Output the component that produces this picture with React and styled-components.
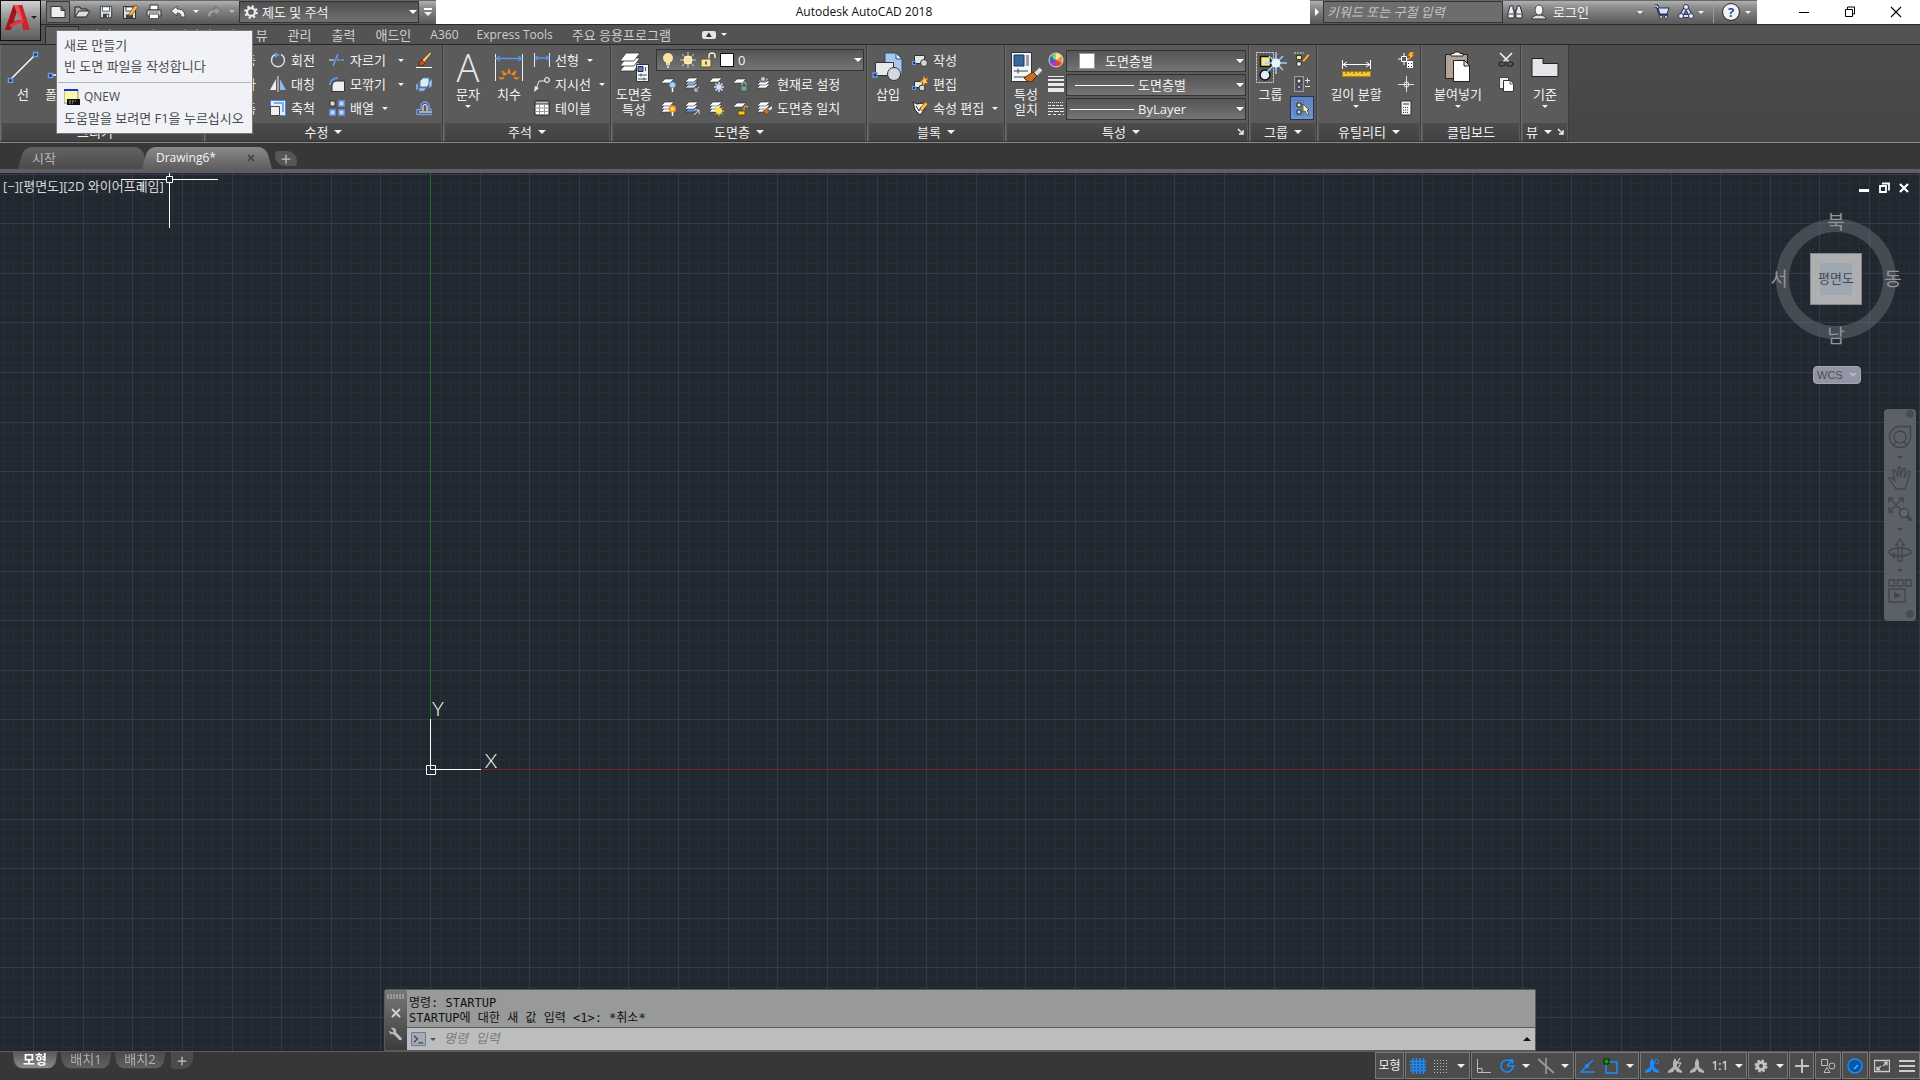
import React from "react";
import styled, { createGlobalStyle } from "styled-components";

const GlobalStyle = createGlobalStyle`
	* {
		box-sizing: border-box;
	}
	body {
		margin: 0;
		overflow: hidden;
		background: #373737;
		color: #f2f2f2;
		font: 13px/16px "Open Sans", "Noto Sans CJK KR", sans-serif;
	}
	button,
	input,
	select {
		margin: 0;
		padding: 0;
		border: 0;
		border-radius: 0;
		background: none;
		color: inherit;
		font: inherit;
	}
	svg {
		display: block;
		flex: none;
	}
`;

/* ---------- icons ---------- */

const sheet = (y, fill = "#fff") => (
	<path d={`M5 ${y}h9l-4 4H1z`} fill={fill} stroke="#333" strokeWidth=".6" />
);
const stack = (a = "#fff", b = "#fff", c = "#fff") => (
	<>
		{sheet(8, c)}
		{sheet(5, b)}
		{sheet(2, a)}
	</>
);
const Compass = ({ fill }) => (
	<path d="M8 0l2 4v5l5 4v2l-5-1-2-3-2 3-5 1v-2l5-4V4z" fill={fill} />
);

const icons = {
	newFile: (
		<path d="M1 2.500h10l4 4v7H1z M11 2.500v4h4" fill="#eee" stroke="#333" />
	),
	open: (
		<>
			<path d="M1 13V3h5l1 2h6v2" fill="#aaa" stroke="#222" />
			<path d="M1 13l4-6h11l-4 6z" fill="#ddd" stroke="#222" />
		</>
	),
	save: (
		<>
			<path d="M1.500 1.500h13v13h-13z" fill="#ddd" stroke="#272f3b" />
			<path d="M4 2h8v5H4z" fill="#fff" stroke="#455" />
			<path d="M4.500 10h7v4.500h-7z" fill="#345" />
			<path d="M9 11h1.500v3H9z" fill="#eee" />
		</>
	),
	saveAs: (
		<>
			<path d="M1.500 2.500h12v12h-12z" fill="#ddd" stroke="#272f3b" />
			<path d="M4 3h7v4H4z" fill="#fff" stroke="#455" />
			<path d="M4 10.500h7v4H4z" fill="#345" />
			<path d="M7 10l6-9 3 2-6 8-3 1z" fill="#f4b942" stroke="#6b3d11" strokeWidth=".7" />
		</>
	),
	print: (
		<>
			<path d="M4 1h8v5H4z" fill="#fff" stroke="#333" />
			<path d="M1 6h14v6H1z" fill="#ccd0d6" stroke="#333" />
			<path d="M3.500 10h9v4.500h-9z" fill="#fff" stroke="#555" />
			<path d="M3 8h10" stroke="#788" />
		</>
	),
	undo: <path d="M1 7l6-5v3c5 0 8 2 8 8h-4c0-3-1-4-4-4v3z" fill="#eee" stroke="#333" strokeWidth=".8" />,
	redo: <path d="M15 7L9 2v3c-5 0-8 2-8 8h4c0-3 1-4 4-4v3z" fill="#999" stroke="#666" strokeWidth=".8" />,
	gear: (
		<>
			<circle cx="8" cy="8" r="6.500" fill="none" stroke="#eee" strokeWidth="2.500" strokeDasharray="2.500 2.600" />
			<circle cx="8" cy="8" r="4.500" fill="none" stroke="#eee" strokeWidth="2.500" />
		</>
	),
	binoculars: (
		<>
			<path d="M3 2h3v3l1 2v7H1V9z M10 2h3l2 7v5H9V7l1-2z" fill="#eee" stroke="#222b3d" />
			<path d="M7 6h2v4H7z" fill="#445" />
			<path d="M2 10h4M10 10h4" stroke="#334" />
		</>
	),
	user: (
		<>
			<path d="M1 15c0-3 3-3 5-4h4c2 1 5 1 5 4z" fill="#ddd" stroke="#334" />
			<ellipse cx="8" cy="6" rx="4" ry="5" fill="#f4f4f4" stroke="#445" />
		</>
	),
	cart: (
		<>
			<path d="M0 2h3l3 8h8" fill="none" stroke="#26356b" strokeWidth="3" />
			<path d="M4 4h11l-2 6H6z" fill="#dfe3ee" stroke="#26356b" />
			<path d="M0 2h3l1 2" stroke="#fff" fill="none" />
			<circle cx="7" cy="13" r="1.500" fill="#fff" stroke="#26356b" />
			<circle cx="12" cy="13" r="1.500" fill="#fff" stroke="#26356b" />
		</>
	),
	exchange: (
		<>
			<path d="M8 3l5 9H3z" fill="none" stroke="#26356b" strokeWidth="4" strokeLinejoin="round" />
			<path d="M8 3l5 9H3z" fill="none" stroke="#dfe3ee" strokeWidth="2" />
			<circle cx="8" cy="3" r="2.500" fill="#eee" stroke="#26356b" />
			<circle cx="3" cy="12" r="2.500" fill="#eee" stroke="#26356b" />
			<circle cx="13" cy="12" r="2.500" fill="#eee" stroke="#26356b" />
		</>
	),
	line: (
		<>
			<path d="M3 29L29 3" stroke="#fff" strokeWidth="1.500" />
			<path d="M1.500 27.500h4v4h-4z M26.500 1.500h4v4h-4z" fill="#234" stroke="#6a9cf0" strokeWidth="1.500" />
		</>
	),
	polyline: (
		<>
			<path d="M3 24h22a8 8 0 0 0 0-16" fill="none" stroke="#fff" strokeWidth="1.500" />
			<path d="M1.500 22.500h4v4h-4z" fill="#234" stroke="#6a9cf0" strokeWidth="1.500" />
		</>
	),
	move: <path d="M8 0v16M0 8h16" stroke="#ddd" strokeWidth="2" />,
	copy: (
		<>
			<circle cx="6" cy="6" r="4" fill="none" stroke="#6a9cf0" />
			<circle cx="10" cy="10" r="4" fill="none" stroke="#ddd" />
		</>
	),
	stretch: <path d="M1 5h9v9H1z" fill="none" stroke="#ddd" strokeDasharray="2 1" />,
	rotate: (
		<>
			<path d="M5 2.500a6.500 6.500 0 1 0 6 0" fill="none" stroke="#ddd" strokeWidth="1.500" />
			<path d="M5 0l5 3-5 3z" fill="#5b96ee" />
		</>
	),
	mirror: (
		<>
			<path d="M6 3v11H0z" fill="#eee" />
			<path d="M10 3v11h6z" fill="#8fb8ea" />
			<path d="M8 0v16" stroke="#eee" />
		</>
	),
	scale: (
		<>
			<path d="M.500.500h15v15H.500z" fill="#e8eefb" stroke="#4f86d9" />
			<path d="M4 3h9v9" fill="none" stroke="#7fa9e8" strokeWidth="2" />
			<path d="M.500 6.500h9v9h-9z" fill="#eee" stroke="#444" />
		</>
	),
	trim: (
		<>
			<path d="M0 8h5" stroke="#eee" />
			<path d="M4 14L9 2" stroke="#6a9cf0" strokeWidth="1.500" />
			<path d="M8 8h8" stroke="#6a9cf0" strokeWidth="1.500" strokeDasharray="3 1" />
		</>
	),
	fillet: (
		<>
			<path d="M3 15.500V10c0-3 2-5 5-5h7.500v10.500z" fill="#eee" stroke="#333" />
			<path d="M1 9c0-4 3-7 8-7" fill="none" stroke="#5b96ee" strokeWidth="2" />
		</>
	),
	array: (
		<>
			<path d="M1 1h5v5H1z" fill="#ddd" stroke="#333" />
			<path d="M10 1h5v5h-5z M1 10h5v5H1z M10 10h5v5h-5z" fill="#c6d8f5" stroke="#6a9cf0" strokeWidth="1.500" />
		</>
	),
	erase: (
		<>
			<path d="M5 9L14 0l2 1-8 10z" fill="#f3c76b" stroke="#222" strokeWidth=".6" />
			<path d="M3 10l3-2 3 3c-2 3-4 3-6 2z" fill="#d94a12" stroke="#401" strokeWidth=".6" />
			<path d="M0 15.500h16" stroke="#fff" />
		</>
	),
	explode: (
		<>
			<path d="M4 5l3-3h6v6l-2 3H4z" fill="#dfe8f5" stroke="#5b82b8" />
			<path d="M0 9l2-2v6l-2 1z M13 6l3-3v7l-3 2z M3 12h7l-2 3H3z" fill="#9bbbe2" stroke="#5b82b8" strokeWidth=".6" />
		</>
	),
	offset: (
		<>
			<path d="M16 14.500H2.500a2 2 0 0 1 0-5H5V6a4 4 0 0 1 8 0v3.500h3" fill="none" stroke="#6a9cf0" strokeWidth="1.500" />
			<path d="M16 12H3M7 11V6.500a2 2 0 0 1 4 0V11" fill="none" stroke="#fff" />
		</>
	),
	dimension: (
		<>
			<path d="M2.500 3v27M29.500 3v27" stroke="#eee" />
			<path d="M3 7.500h26M7 5L3 7.500 7 10M25 5l4 2.500-4 2.500" fill="none" stroke="#5b96ee" strokeWidth="1.300" />
			<path d="M15 22l1-4 1 4z M11 24l-2-4 4 3z M21 24l2-4-4 3z M8 28l-1-1 4 0z M24 28l1-1-4 0z" fill="#ffc83c" stroke="#e68414" strokeWidth="1.500" />
		</>
	),
	linear: (
		<>
			<path d="M.500 1v14M15.500 1v14" stroke="#eee" />
			<path d="M1 6h14M4 4L1 6l3 2M12 4l3 2-3 2" fill="none" stroke="#5b96ee" strokeWidth="1.300" />
		</>
	),
	leader: (
		<>
			<path d="M2 13L5 5h6" fill="none" stroke="#eee" />
			<path d="M0 16l1-6 4 2z" fill="#eee" />
			<circle cx="13" cy="4" r="2.500" fill="#666" stroke="#fff" />
		</>
	),
	table: (
		<>
			<path d="M1 1h14v14H1z" fill="#fff" stroke="#222" />
			<path d="M1 1h14v3H1z" fill="#a9c2d6" stroke="#333" />
			<path d="M1 8h14M1 11.500h14M5.500 4v11M10.500 4v11" stroke="#999" />
		</>
	),
	layerProps: (
		<>
			{[14, 9, 4].map((y) => (
				<path key={y} d={`M8 ${y - 2}h14l-6 8H2z`} fill="#fff" stroke="#333" strokeWidth=".8" />
			))}
			<path d="M18.500 13.500h12v17h-12z" fill="#f4f5f9" stroke="#333" />
			<path d="M20 15.500h5v5h-5z" fill="#4f80c6" stroke="#225" />
			<path d="M27.500 16v4M20 24h9M20 28h9M23 22.500v3M26 26.500v3" stroke="#456" />
		</>
	),
	bulb: (
		<>
			<circle cx="8" cy="6" r="5" fill="#f7e6a0" />
			<path d="M6 9h4v3H6z" fill="#f7e6a0" />
			<path d="M6 12.500h4M7 15h2" stroke="#ccc" strokeWidth="2" />
		</>
	),
	sun: (
		<>
			<path d="M8 0v16M0 8h16M2 2l12 12M14 2L2 14" stroke="#ddd" strokeWidth=".9" />
			<circle cx="8" cy="8" r="4" fill="#f7e6a0" stroke="#fff6cc" />
		</>
	),
	unlock: (
		<>
			<path d="M9 7V4a3 3 0 0 1 6 0v2" fill="none" stroke="#f3ead0" strokeWidth="1.500" />
			<path d="M1 7h10v8H1z" fill="#f7e6a0" stroke="#5f5426" />
			<path d="M6 9.500v3" stroke="#333" strokeWidth="1.500" />
		</>
	),
	layerOff: (
		<>
			{sheet(3)}
			<circle cx="12.500" cy="9" r="3" fill="#a8d4f7" stroke="#5490cf" />
			<path d="M12.500 12v4" stroke="#fff" strokeWidth="1.500" />
		</>
	),
	layerIso: (
		<>
			{stack("#fff", "#8fb8e8", "#cde")}
			<path d="M15 11l-4 4M11 12v3h3" fill="none" stroke="#ddd" />
		</>
	),
	layerFreeze: (
		<>
			{sheet(2)}
			<path d="M11 6v10M6 11h10M7.500 7.500l7 7M14.500 7.500l-7 7" stroke="#cfe2ff" strokeWidth="1.500" />
		</>
	),
	layerLock: (
		<>
			{sheet(3)}
			<path d="M10 10V8a2 2 0 0 1 4 0v2" fill="none" stroke="#a9c9c4" />
			<path d="M9 10h6v5H9z" fill="#7ba69e" stroke="#3f5f5a" />
		</>
	),
	layerCurrent: (
		<>
			{stack("#7fa9d8", "#fff", "#fff")}
			<circle cx="7" cy="3" r="2.500" fill="#ccc" stroke="#555" />
		</>
	),
	layerOn: (
		<>
			{stack()}
			<circle cx="12.500" cy="9" r="3" fill="#ffd25a" stroke="#e8891c" strokeWidth="1.500" />
			<path d="M12.500 12v4" stroke="#fff" strokeWidth="1.500" />
		</>
	),
	layerUniso: (
		<>
			{stack("#fff", "#fff", "#5d92e0")}
			<path d="M10 15l5-5M11 10h4v4" fill="none" stroke="#ddd" />
		</>
	),
	layerThaw: (
		<>
			{stack()}
			<path d="M11 6v10M6 11h10M7.500 7.500l7 7M14.500 7.500l-7 7" stroke="#ffd84a" />
			<circle cx="11" cy="11" r="3" fill="#ffe340" />
		</>
	),
	layerUnlock: (
		<>
			{sheet(3)}
			<path d="M12 11V8a2 2 0 0 1 4 0" fill="none" stroke="#ffc321" />
			<path d="M6 11h7v4H6z" fill="#ffc321" stroke="#6b4700" />
		</>
	),
	layerMatch: (
		<>
			{stack()}
			<path d="M16 7l-3 3" stroke="#eee" strokeWidth="2" />
			<path d="M7 11l5-2 2 3-4 3z" fill="#c8701e" stroke="#532a04" strokeWidth=".6" />
		</>
	),
	insert: (
		<>
			<path d="M13 2h11l6 6v16H13z" fill="#a9c8ee" stroke="#2e4e78" />
			<path d="M24 2v6h6z" fill="#eaf2fd" stroke="#2e4e78" />
			<path d="M3.500 11.500h18v13h-18z" fill="#e8e9ec" stroke="#333" />
			<circle cx="22" cy="23" r="6.500" fill="#d5d8dd" stroke="#333" />
			<path d="M1 22h4v4H1z" fill="#234" stroke="#6a9cf0" strokeWidth="1.300" />
		</>
	),
	blockCreate: (
		<>
			<path d="M2.500 3.500h10v8h-10z" fill="#e4e6ea" stroke="#333" />
			<circle cx="12" cy="11" r="3.500" fill="#cfd2d8" stroke="#333" />
			<path d="M.500 9.500h3v3h-3z" fill="#234" stroke="#6a9cf0" />
		</>
	),
	blockEdit: (
		<>
			<path d="M2.500 5.500h8v6h-8z" fill="#e4e6ea" stroke="#333" />
			<circle cx="10" cy="12" r="3" fill="#cfd2d8" stroke="#333" />
			<path d="M.500 10.500h3v3h-3z" fill="#234" stroke="#6a9cf0" />
			<path d="M12 0l1 3 3-1-2 3 2 2-3 0-2 3 0-4-3 0 3-2z" fill="#ffd25a" stroke="#e27b12" strokeWidth=".6" />
		</>
	),
	attribute: (
		<>
			<path d="M1 2l4 2 6-1 2 6-5 6-5-5z" fill="#eee" stroke="#222" />
			<path d="M4 6l3 5 2-4" fill="none" stroke="#333" />
			<path d="M8 9l5-7 3 2-6 7z" fill="#ffc14d" stroke="#8a3d08" strokeWidth=".7" />
		</>
	),
	matchProps: (
		<>
			<path d="M1.500 1.500h20v29h-20z" fill="#f4f5f9" stroke="#333" />
			<path d="M4 4h10v11H4z" fill="#39689f" stroke="#1b3457" />
			<path d="M16 4h3v11h-3z" fill="#9aa1ab" />
			<path d="M4 20h14M4 26h14M8 17.500v5" stroke="#345" />
			<path d="M31 18l-6 6" stroke="#ddd" strokeWidth="4" />
			<path d="M14 27l9-6 4 4-6 6c-3 0-5-2-7-4z" fill="#c8701e" stroke="#532a04" />
		</>
	),
	wheel: (
		<>
			{["#f4e04a", "#f0953a", "#e4403a", "#b03ab8", "#3a5fd0", "#45b04a"].map((c, i) => (
				<path key={c} d="M8 8V1a7 7 0 0 1 6.060 3.500z" fill={c} transform={`rotate(${i * 60} 8 8)`} />
			))}
			<circle cx="8" cy="8" r="7" fill="none" stroke="#ddd" />
			<circle cx="8" cy="5" r="3" fill="#fff" opacity=".4" />
		</>
	),
	weights: (
		<>
			<path d="M0 .500h16" stroke="#e8e8e8" />
			<path d="M0 4h16" stroke="#e8e8e8" strokeWidth="2" />
			<path d="M0 8.500h16" stroke="#e8e8e8" strokeWidth="3" />
			<path d="M0 14h16" stroke="#e8e8e8" strokeWidth="4" />
		</>
	),
	linetypes: (
		<>
			<path d="M0 2.500h16" stroke="#e8e8e8" strokeDasharray="1 1" />
			<path d="M0 5.500h16" stroke="#e8e8e8" strokeDasharray="3 1" />
			<path d="M0 8.500h16" stroke="#e8e8e8" />
			<path d="M0 11.500h16" stroke="#e8e8e8" strokeDasharray="5 1" />
			<path d="M0 14.500h16" stroke="#e8e8e8" strokeDasharray="3 2" />
		</>
	),
	group: (
		<>
			<path d="M1.500 1.500h17v30h-17z" fill="none" stroke="#ddd" strokeDasharray="2 1" />
			<path d="M5.500 5.500h10v10h-10z" fill="#f3e48c" stroke="#111" strokeWidth="1.500" />
			<circle cx="10" cy="24" r="5" fill="#e4eef0" stroke="#111" strokeWidth="1.500" />
			<path d="M21 1v22M10 12h22M14 5l14 14M28 5L12 21" stroke="#9cd0ff" strokeWidth="1.500" />
			<circle cx="21" cy="12" r="4.500" fill="#eaf6ff" />
		</>
	),
	groupEdit: (
		<>
			<path d="M0 1h10" stroke="#ddd" strokeDasharray="2 1" />
			<path d="M2.500 3.500h5v4h-5z" fill="#f3e48c" stroke="#333" />
			<circle cx="5" cy="12" r="2.500" fill="#dfeeee" stroke="#222" />
			<path d="M8 9l6-7 2 1-6 7z" fill="#ffc14d" stroke="#a0320a" strokeWidth=".6" />
		</>
	),
	ungroup: (
		<>
			<path d="M.500.500h9v15h-9z" fill="none" stroke="#ddd" strokeDasharray="1 1" />
			<path d="M3 3h4v4H3z" fill="#ddd" stroke="#222" />
			<circle cx="5" cy="11" r="2" fill="#8db8ee" stroke="#223" />
			<path d="M11 4.500h5M13.500 2v5M11 10.500h5" stroke="#ddd" />
		</>
	),
	groupSelect: (
		<>
			<path d="M.500.500h9v15h-9z" fill="none" stroke="#3f6fd0" strokeDasharray="1 1" />
			<path d="M3 3h4v4H3z" fill="#f3e48c" stroke="#222" />
			<path d="M3 10h4v4H3z" fill="#c9d7dc" stroke="#222" />
			<path d="M9 4l6 6-2 .500 2 4-2 .500-2-4-2 1z" fill="#fbf3a8" stroke="#333" strokeWidth=".7" />
		</>
	),
	measure: (
		<>
			<path d="M2.500 9v9M30.500 9v9M3 13.500h27M7 11l-4 2.500 4 2.500M26 11l4 2.500-4 2.500" fill="none" stroke="#fff" />
			<path d="M2.500 20.500h28v5h-28z" fill="#f4ca2e" stroke="#b3820d" />
			<path d="M6 20v3M10 20v2M14 20v3M18 20v2M22 20v3M26 20v2" stroke="#7a5500" />
		</>
	),
	quickSelect: (
		<>
			<path d="M6 1v4M6 9v4M0 7h4M8 7h3" stroke="#fff" />
			<path d="M3.500 4.500h5v5h-5z" fill="none" stroke="#fff" />
			<path d="M12 0h4l-2 3h2l-5 5 1-4h-2z" fill="#ffb62b" stroke="#c9650a" strokeWidth=".5" />
			<path d="M9 9h6v7H9z" fill="#fff" />
			<path d="M10 11.500h1m2 0h1M10 14.500h1m2 0h1" stroke="#222" />
		</>
	),
	point: (
		<>
			<path d="M8.500 0v16M0 8.500h16" stroke="#ddd" />
			<circle cx="8.500" cy="8.500" r="2.500" fill="none" stroke="#eee" />
		</>
	),
	calculator: (
		<>
			<path d="M3 1h10v14H3z" fill="#f2f2f2" stroke="#333" />
			<path d="M5 3h6v2H5z" fill="#8b9499" />
			<path d="M5 7.500h6M5 10h6M5 12.500h6" stroke="#444" strokeDasharray="1 1" />
		</>
	),
	paste: (
		<>
			<path d="M3.500 3.500h22v24h-22z" fill="#b3a396" stroke="#222" />
			<path d="M9 5V2.500h3L13 1h4l1 1.500h3V5z" fill="#fff" stroke="#222" />
			<path d="M11.500 9.500h11l5 5v16h-16z" fill="#fff" stroke="#222" />
			<path d="M22 9v6h6z" fill="#ddd" stroke="#222" />
		</>
	),
	cut: (
		<>
			<path d="M2 1l9 9M14 1l-9 9" stroke="#eee" strokeWidth="1.700" />
			<ellipse cx="4" cy="12" rx="3" ry="2" fill="none" stroke="#2f2f2f" strokeWidth="1.500" />
			<ellipse cx="12" cy="12" rx="3" ry="2" fill="none" stroke="#2f2f2f" strokeWidth="1.500" />
		</>
	),
	copyClip: (
		<>
			<path d="M1.500 1.500h9v11h-9z" fill="#eee" stroke="#444" />
			<path d="M5.500 4.500h7l3 3v8h-10z" fill="#fff" stroke="#333" />
			<path d="M12 4v4h4" fill="none" stroke="#555" />
		</>
	),
	baseView: <path d="M3 7.500h11v5h15v13H3z" fill="#e3e5ea" stroke="#222" />,
	gridOn: (
		<path d="M0 3.500h16M0 6.500h16M0 9.500h16M0 12.500h16M3 0v16M6.500 0v16M10 0v16M13.500 0v16" stroke="#1b8cff" strokeWidth="1.500" />
	),
	snapDots: (
		<path d="M1 2.500h14M1 5.500h14M1 8.500h14M1 11.500h14M1 14.500h14" stroke="#bdbdbd" strokeDasharray="1 2" />
	),
	ortho: <path d="M1.500 1v13.500H15M2 10.500h4v4" fill="none" stroke="#bdbdbd" />,
	polar: (
		<path d="M14 8a6 6 0 1 1-3-5.200M8 8h8M8 8l5-5.500M10 2h3.500v3.500" fill="none" stroke="#1b8cff" strokeWidth="1.500" />
	),
	iso: (
		<>
			<path d="M8 0v16" stroke="#ccc" />
			<path d="M0 1l16 14" stroke="#999" strokeWidth="2" />
		</>
	),
	otrack: (
		<>
			<path d="M13 2L1 14h14" fill="none" stroke="#1b8cff" strokeWidth="1.500" />
			<circle cx="7" cy="8" r="2" fill="#1b8cff" />
		</>
	),
	osnap: (
		<>
			<path d="M3 4h11v11H3z" fill="none" stroke="#1b8cff" strokeWidth="1.500" />
			<path d="M1 1h5v5H1z" fill="#0a0" stroke="#020" />
		</>
	),
	annoVisible: (
		<>
			<Compass fill="#1b8cff" />
			<circle cx="12.500" cy="3.500" r="2" fill="#445" stroke="#1b8cff" />
		</>
	),
	annoAuto: (
		<>
			<Compass fill="#b5b5b5" />
			<path d="M13 0l-3 5h4l-3 5" fill="none" stroke="#ddd" />
		</>
	),
	annoScale: <Compass fill="#b5b5b5" />,
	cog: (
		<>
			<circle cx="8" cy="8" r="5" fill="none" stroke="#c4c4c4" strokeWidth="3" strokeDasharray="2.400 1.500" />
			<circle cx="8" cy="8" r="3.500" fill="none" stroke="#c4c4c4" strokeWidth="3" />
		</>
	),
	plus: <path d="M8 1v14M1 8h14" stroke="#c4c4c4" strokeWidth="2" />,
	isolate: (
		<>
			<path d="M1.500 1.500h6v6h-6z M7 9.500l3 5H4z" fill="none" stroke="#bdbdbd" />
			<circle cx="12" cy="8" r="3" fill="none" stroke="#bdbdbd" />
		</>
	),
	hardware: (
		<>
			<circle cx="8" cy="8" r="7" fill="#0757a8" stroke="#1b8cff" strokeWidth="1.500" />
			<path d="M7 11l4-4" stroke="#5bb2ff" strokeWidth="1.500" />
		</>
	),
	fullscreen: (
		<path d="M.500 2.500h15v11H.500z M9 8l4-3.500M10 4.500h3v3M7 8l-4 3.500M3 8.500v3h3" fill="none" stroke="#ccc" strokeWidth="1.300" />
	),
	menu: <path d="M0 3h16M0 8h16M0 13h16" stroke="#ccc" strokeWidth="2" />,
	minimize: <path d="M3 8.500h10" stroke="#000" />,
	restore: <path d="M3.500 5.500h7v7h-7z M5.500 5v-2h7v7h-2" fill="none" stroke="#000" />,
	close: <path d="M3 3l10 10M13 3L3 13" stroke="#000" strokeWidth="1.100" />,
	minimizeSmall: <path d="M3 10.500h10" stroke="#fff" strokeWidth="3" />,
	restoreSmall: <path d="M4 6h6v6H4z M6 3.500h7v7" fill="none" stroke="#fff" strokeWidth="1.800" />,
	closeSmall: <path d="M4 4l8 8M12 4l-8 8" stroke="#fff" strokeWidth="2.200" />,
	x: <path d="M4 4l8 8M12 4l-8 8" stroke="currentColor" strokeWidth="2" />,
	wrench: (
		<path d="M2 1l3 3v2H3L0 4c0 4 3 5 5 4l7 7c2 1 4-1 2-3L8 6c1-3-1-6-6-5z" fill="#b9bbc2" />
	),
	prompt: (
		<>
			<path d="M.500.500h15v14H.500z" fill="#a5acb7" stroke="#6b7788" />
			<path d="M3 4l4 3.500L3 11M8 11.500h5" fill="none" stroke="#3a4250" strokeWidth="1.300" />
		</>
	),
	command: (
		<>
			<path d="M0 1h14v13H0z" fill="#fbf7a8" stroke="#888" />
			<path d="M0 1h14" stroke="#1a2fd0" strokeWidth="2" />
			<path d="M3 10h13v6H3z" fill="#111" />
			<path d="M5 12h7M5 14h4" stroke="#aaa" strokeDasharray="2 1" />
		</>
	),
	wheelNav: (
		<>
			<circle cx="12" cy="12" r="6" fill="none" stroke="#41464e" strokeWidth="1.500" />
			<path d="M12 1.500h10.500V12A10.500 10.500 0 1 1 12 1.500zM8 17l-3 3M16 17l3 3" fill="none" stroke="#41464e" strokeWidth="1.300" />
		</>
	),
	hand: (
		<path d="M8 23L2 14c-2-2 0-3 2-2l3 3L5 5c0-2 2-2 2.500 0L10 11V2.500c0-2 2.500-2 2.500 0V11L15 3c1-2 3-1 2.500 1L16 12l4-6c1-1.500 3-.500 2 1.500-2 4-2 9-5 15.500z" fill="none" stroke="#41464e" strokeWidth="1.300" />
	),
	zoomNav: (
		<>
			<path d="M1 1l14 14M15 1L1 15M1 6V1h5M10 1h5v5M1 10v5h5" fill="none" stroke="#41464e" strokeWidth="1.500" />
			<circle cx="16" cy="16" r="4.500" fill="#61666c" stroke="#41464e" strokeWidth="1.500" />
			<path d="M19 19l5 5" stroke="#41464e" strokeWidth="3" />
		</>
	),
	orbit: (
		<>
			<path d="M12 1l4 6h-2v16h-4V7H8z" fill="none" stroke="#41464e" strokeWidth="1.300" />
			<ellipse cx="12" cy="14" rx="11" ry="4" fill="none" stroke="#41464e" strokeWidth="1.500" />
			<path d="M7 14v7l-5-4z" fill="#41464e" />
		</>
	),
	motion: (
		<>
			<path d="M1 1h5.500v6H1zM9.500 1H15v6H9.500zM17.500 1H23v6h-5.500zM1 10h16v13H1z" fill="none" stroke="#41464e" strokeWidth="1.300" />
			<path d="M6 13l7 3.500L6 20z" fill="#41464e" />
		</>
	),
};

const Icon = ({ name, size = 16, box = 16 }) => (
	<svg width={size} height={size} viewBox={`0 0 ${box} ${box}`} aria-hidden="true">
		{icons[name]}
	</svg>
);

/* ---------- shared parts ---------- */

const Arrow = styled.span`
	flex: none;
	width: 0;
	height: 0;
	border: ${({ $size = 3 }) => $size}px solid transparent;
	border-top-color: ${({ $color = "#f2f2f2" }) => $color};
	border-bottom: 0;
`;

const Sprite = styled.button`
	display: flex;
	align-items: center;
	justify-content: center;
	flex: none;
	width: ${({ $w = 24 }) => $w}px;
	height: 22px;
	border: 1px solid ${({ $active }) => ($active ? "#3a3a3a" : "transparent")};
	background: ${({ $active }) => ($active ? "#767676" : "none")};
`;

const Combo = styled.div`
	display: flex;
	align-items: center;
	position: relative;
	width: ${({ $w }) => $w}px;
	height: 22px;
	padding-left: ${({ $pad = 4 }) => $pad}px;
	gap: ${({ $gap = 4 }) => $gap}px;
	border: 1px solid #333;
	background: linear-gradient(#555, #747474);
	select {
		appearance: none;
		flex: 1;
		min-width: 0;
		height: 20px;
		outline: 0;
		white-space: pre;
	}
	option {
		color: #222;
	}
	&::after {
		content: "";
		position: absolute;
		right: 1px;
		top: 8px;
		border: 4px solid transparent;
		border-top-color: #fff;
		border-bottom: 0;
		pointer-events: none;
	}
`;

const LayerCombo = styled(Combo)`
	flex: none;
`;

/* ---------- title bar ---------- */

const Shell = styled.div`
	display: flex;
	flex-direction: column;
	height: 100vh;
`;

const TitleBar = styled.header`
	display: flex;
	height: 24px;
	background: #fff;
	color: #f2f2f2;
`;

const metal = "linear-gradient(#b0b0b0, #8a8a8a 30%, #585858)";

const AppButton = styled.button`
	display: flex;
	align-items: center;
	width: 41px;
	height: 41px;
	padding: 0 0 6px 4px;
	gap: 1px;
	z-index: 3;
	flex: none;
	border: 1px solid #111;
	background: linear-gradient(#d0d0d0, #8a8a8a 50%, #5c5c5c);
`;

const QuickAccess = styled.nav`
	display: flex;
	align-items: center;
	padding: 0 0 2px 5px;
	background: ${metal};
	border-top: 1px solid #666;
`;

const Workspace = styled(Combo)`
	background: linear-gradient(#4f4f4f, #717171);
	margin-left: 1px;
`;

const WindowTitle = styled.h1`
	flex: 1;
	margin: 0;
	padding-right: 18px;
	text-align: center;
	font-weight: 400;
	font-size: 12px;
	line-height: 23px;
	color: #111;
`;

const InfoCenter = styled.div`
	display: flex;
	align-items: center;
	flex: none;
	width: 447px;
	padding-bottom: 1px;
	background: ${metal};
	border-top: 1px solid #666;
`;

const Search = styled.input`
	flex: none;
	width: 180px;
	height: 22px;
	padding: 0 3px;
	border: 1px solid #333;
	background: #6d6d6d;
	font-style: italic;
	&::placeholder {
		color: #c2c2c2;
		opacity: 1;
	}
`;

const SignIn = styled.button`
	display: flex;
	align-items: center;
	justify-content: space-between;
	flex: none;
	width: 99px;
	padding: 0 7px 0 2px;
`;

const Divider = styled.span`
	width: 1px;
	height: 22px;
	background: #999;
	margin: 0 9px;
`;

const Help = styled.button`
	width: 16px;
	height: 16px;
	border-radius: 50%;
	background: #f4f4f4;
	outline: 1px solid #333;
	color: #1b4fb0;
	font-size: 13px;
	font-weight: 700;
	line-height: 16px;
`;

const WindowControls = styled.div`
	display: flex;
	margin-left: 24px;
	padding-right: 1px;
	button {
		display: flex;
		align-items: center;
		justify-content: center;
		width: 46px;
	}
`;

const CollapseArrow = styled.button`
	width: 13px;
	height: 22px;
	display: flex;
	align-items: center;
	justify-content: center;
	&::after {
		content: "";
		border: 4px solid transparent;
		border-left-color: #fff;
		border-right: 0;
	}
`;

const CustomizeButton = styled.button`
	display: flex;
	flex-direction: column;
	align-items: center;
	justify-content: center;
	gap: 2px;
	width: 17px;
	height: 22px;
	&::before {
		content: "";
		width: 8px;
		height: 2px;
		background: #fff;
	}
`;

/* ---------- ribbon ---------- */

const RibbonTabs = styled.nav`
	display: flex;
	align-items: stretch;
	height: 21px;
	padding-left: 46px;
	border-top: 1px solid #2a2a2a;
	border-bottom: 1px solid #2a2a2a;
	background: #535353;
`;

const RibbonTab = styled.button`
	padding: 0 ${({ $latin }) => ($latin ? 9 : 10)}px;
	font-size: ${({ $latin }) => ($latin ? 12 : 13)}px;
	line-height: 18px;
	color: #cfcfcf;
	margin-top: ${({ $active }) => ($active ? 2 : 0)}px;
	background: ${({ $active }) => ($active ? "#5f5f5f" : "none")};
	box-shadow: ${({ $active }) => ($active ? "0 0 0 1px #2a2a2a" : "none")};
`;

const RibbonToggle = styled.button`
	display: flex;
	align-items: center;
	gap: 5px;
	margin-left: 21px;
	&::before {
		content: "▲";
		width: 14px;
		height: 8px;
		border-radius: 2px;
		background: #e4e4e4;
		color: #333;
		font-size: 6px;
		line-height: 8px;
	}
`;

const Ribbon = styled.section`
	display: flex;
	height: 98px;
	background: linear-gradient(#4b4b4b, #454545);
	border-bottom: 1px solid #8b8b8b;
`;

const Panel = styled.section`
	display: flex;
	flex-direction: column;
	flex: none;
	width: ${({ $w }) => $w}px;
	border-left: 1px solid #6b6b6b;
	border-right: 1px solid #3c3c3c;
	border-bottom: 1px solid #333;
	background: #5b5b5b;
`;

const PanelBody = styled.div`
	display: flex;
	flex: 1;
	padding-top: 3px;
	padding-left: ${({ $pad = 2 }) => $pad}px;
`;

const PanelTitle = styled.button`
	display: flex;
	align-items: center;
	justify-content: center;
	gap: 6px;
	position: relative;
	height: 18px;
	margin: 0 1px;
	padding-right: ${({ $launcher }) => ($launcher ? 12 : 0)}px;
	background: linear-gradient(#4c4c4c, #424242);
	svg {
		position: absolute;
		right: 2px;
	}
`;

const BigButton = styled.button`
	display: flex;
	flex-direction: column;
	align-items: center;
	align-self: flex-start;
	flex: none;
	width: ${({ $w }) => $w}px;
	padding-top: 3px;
	line-height: 15px;
	.label {
		margin-top: 4px;
		white-space: pre;
	}
	${Arrow} {
		margin-top: 3px;
	}
`;

const Letter = styled.span`
	height: 32px;
	font: 300 38px/32px "Open Sans", sans-serif;
	color: #e8e8e8;
`;

const Column = styled.div`
	display: flex;
	flex-direction: column;
	flex: none;
	width: ${({ $w }) => ($w ? `${$w}px` : "auto")};
	margin-left: ${({ $gap = 0 }) => $gap}px;
`;

const Row = styled.div`
	display: flex;
	align-items: center;
	height: 24px;
	gap: 8px;
	padding-left: ${({ $pad = 0 }) => $pad}px;
`;

const Tool = styled.button`
	display: flex;
	align-items: center;
	gap: 5px;
	height: 24px;
	white-space: nowrap;
	${Arrow} {
		margin-left: ${({ $far }) => ($far ? 7 : 3)}px;
	}
`;

const GroupToggle = styled.button`
	display: flex;
	align-items: center;
	justify-content: center;
	height: 24px;
	width: 24px;
	border: 1px solid ${({ $active }) => ($active ? "#26345a" : "transparent")};
	background: ${({ $active }) => ($active ? "linear-gradient(#5f83bd, #7195cf)" : "none")};
`;

const Swatch = styled.span`
	flex: none;
	width: ${({ $w = 14 }) => $w}px;
	height: ${({ $w = 14 }) => $w}px;
	background: #fff;
	border: 1px solid ${({ $edge = "#111" }) => $edge};
`;

const Rule = styled.span`
	flex: none;
	width: ${({ $w }) => $w}px;
	height: 1px;
	background: #fff;
`;

const PropertyCombos = styled.div`
	display: flex;
	flex-direction: column;
	gap: 2px;
	padding-top: 2px;
	margin-left: 2px;
`;

const Big = ({ icon, label, w, arrow, letter }) => (
	<BigButton $w={w}>
		{letter ? <Letter>{letter}</Letter> : <Icon name={icon} size={32} box={32} />}
		<span className="label">{label}</span>
		{arrow && <Arrow />}
	</BigButton>
);

const SmallTool = ({ icon, label, arrow, far }) => (
	<Tool $far={far} aria-label={label || icon}>
		<Icon name={icon} />
		{label && <span>{label}</span>}
		{arrow && <Arrow />}
	</Tool>
);

const Launcher = () => (
	<svg width="8" height="8" viewBox="0 0 8 8">
		<path d="M1 1l5 5M6 2v4H2" fill="none" stroke="#eee" strokeWidth="1.500" />
	</svg>
);

const RibbonPanel = ({ title, w, pad, arrow = true, launcher, children }) => (
	<Panel $w={w}>
		<PanelBody $pad={pad}>{children}</PanelBody>
		<PanelTitle $launcher={launcher}>
			{title}
			{arrow && <Arrow $size={4} />}
			{launcher && <Launcher />}
		</PanelTitle>
	</Panel>
);

/* ---------- tooltip ---------- */

const Tooltip = styled.div`
	position: absolute;
	left: 56px;
	top: 30px;
	z-index: 5;
	width: 197px;
	height: 104px;
	padding-top: 4px;
	border: 1px solid #767676;
	background: #f1f2f7;
	color: #4a4a4a;
	white-space: nowrap;
	p {
		margin: 0;
		padding: 0 7px;
		line-height: 21px;
	}
	hr {
		margin: 5px 1px 2px;
		border: 0;
		border-top: 1px solid #b5b5b5;
	}
`;

const CommandName = styled.p`
	display: flex;
	align-items: center;
	gap: 4px;
	height: 23px;
	font-size: 12px;
`;

/* ---------- drawing tabs ---------- */

const FileTabs = styled.nav`
	display: flex;
	align-items: flex-end;
	height: 30px;
	padding-left: 21px;
	background: #373737;
	border-bottom: 4px solid #5e5e5e;
`;

const FileTab = styled.div`
	display: flex;
	align-items: center;
	justify-content: space-between;
	position: relative;
	width: 124px;
	height: 22px;
	padding: 0 12px 0 11px;
	z-index: 0;
	color: ${({ $active }) => ($active ? "#f4f4f4" : "#b5b5b5")};
	font-size: ${({ $active }) => ($active ? 12 : 13)}px;
	&::before,
	&::after {
		content: "";
		position: absolute;
		top: 0;
		bottom: 0;
		z-index: -1;
		background: ${({ $active }) =>
			$active ? "linear-gradient(#8a8a8a, #5e5e5e)" : "linear-gradient(#626262, #4c4c4c)"};
	}
	&::before {
		left: 0;
		right: 50%;
		border-top-left-radius: 8px;
		transform: skewX(-15deg);
	}
	&::after {
		left: 40%;
		right: 0;
		border-top-right-radius: 8px;
		transform: skewX(15deg);
	}
`;

const TabClose = styled.button`
	color: #3f3f3f;
	svg {
		width: 12px;
		height: 12px;
	}
`;

const AddTab = styled.button`
	width: 22px;
	height: ${({ $bottom }) => ($bottom ? 17 : 15)}px;
	margin-left: ${({ $bottom }) => ($bottom ? 4 : 6)}px;
	margin-bottom: ${({ $bottom }) => ($bottom ? 0 : 3)}px;
	border-radius: ${({ $bottom }) => ($bottom ? "0 0 10px 3px" : "3px 10px 3px 10px")};
	background: ${({ $bottom }) => ($bottom ? "#4b4b4b" : "#565656")};
	display: flex;
	align-items: center;
	justify-content: center;
`;

/* ---------- model space ---------- */

const Canvas = styled.main`
	position: relative;
	flex: 1;
	min-height: 0;
	overflow: hidden;
	background: #212830;
`;

const Drawing = styled.svg`
	position: absolute;
	inset: 0;
	width: 100%;
	height: 100%;
`;

const ViewLabel = styled.div`
	position: absolute;
	left: 3px;
	top: 5px;
	color: #d8d8d8;
`;

const ViewControls = styled.div`
	position: absolute;
	top: 7px;
	right: 8px;
	display: flex;
	gap: 4px;
`;

const ViewCube = styled.div`
	position: absolute;
	top: 39px;
	right: 17px;
	width: 134px;
	height: 134px;
	display: grid;
	grid-template: 20px 1fr 20px / 20px 1fr 20px;
	place-items: center;
	color: #929497;
	font-size: 19px;
	line-height: 20px;
	&::before {
		content: "";
		position: absolute;
		inset: 7px;
		border-radius: 50%;
		border: 13px solid rgba(112, 117, 125, 0.45);
	}
	span {
		z-index: 1;
	}
`;

const CubeFace = styled.button`
	width: 52px;
	height: 52px;
	border: 10px solid #adafb1;
	outline: 1px solid #85878a;
	outline-offset: -1px;
	background: #9fa8b0;
	color: #454b55;
	font-size: 13px;
	line-height: 30px;
	display: flex;
	justify-content: center;
	white-space: nowrap;
`;

const Wcs = styled.button`
	position: absolute;
	top: 193px;
	right: 59px;
	display: flex;
	align-items: center;
	justify-content: space-between;
	width: 48px;
	height: 18px;
	padding: 0 3px;
	border-radius: 4px;
	background: #9495a4;
	border: 1px solid #a5a6b3;
	color: #4c4e58;
	font-family: "Liberation Sans", sans-serif;
	font-size: 11px;
`;

const NavBar = styled.div`
	position: absolute;
	top: 236px;
	right: 4px;
	display: flex;
	flex-direction: column;
	align-items: center;
	width: 32px;
	height: 212px;
	border-radius: 4px;
	background: #5c6167;
	gap: 7px;
	padding-top: 1px;
	button {
		display: block;
	}
	i {
		align-self: flex-end;
		margin-right: 2px;
		width: 8px;
		height: 8px;
		border-radius: 50%;
		background: #484d54;
	}
`;

const CommandLine = styled.section`
	position: absolute;
	left: 20%;
	right: 20%;
	bottom: 0;
	display: flex;
	height: 62px;
	border: 1px solid #5a5a5a;
	border-radius: 3px 0 0 0;
	font-family: "DejaVu Sans Mono", "Noto Sans CJK KR", monospace;
	font-size: 12px;
	color: #111;
`;

const Grip = styled.div`
	display: flex;
	flex-direction: column;
	align-items: center;
	gap: 6px;
	width: 22px;
	padding-top: 4px;
	background: linear-gradient(#777, #3c3c3c);
	color: #d0d0d0;
	&::before {
		content: "";
		width: 18px;
		height: 5px;
		background: repeating-linear-gradient(90deg, #999 0 2px, transparent 2px 3px);
	}
`;

const History = styled.div`
	flex: 1;
	display: flex;
	flex-direction: column;
	min-width: 0;
	p {
		margin: 0;
		padding-left: 2px;
		line-height: 15px;
	}
`;

const Log = styled.div`
	height: 38px;
	padding-top: 6px;
	background: rgba(165, 165, 165, 0.9);
	border-bottom: 1px solid #5d5d5d;
`;

const Prompt = styled.label`
	display: flex;
	align-items: center;
	flex: 1;
	gap: 4px;
	padding: 0 4px;
	background: rgba(204, 205, 207, 0.9);
	input {
		flex: 1;
		margin-left: 4px;
		outline: 0;
		font-style: italic;
		font-size: 13px;
	}
	input::placeholder {
		color: #7b7d80;
		opacity: 1;
	}
`;

const UpArrow = styled(Arrow)`
	transform: rotate(180deg);
`;

/* ---------- bottom bar ---------- */

const Footer = styled.footer`
	display: flex;
	justify-content: space-between;
	height: 29px;
	border-top: 1px solid #5a5a5a;
	background: #373737;
`;

const LayoutTabs = styled.nav`
	display: flex;
	padding-left: 11px;
`;

const LayoutTab = styled.button`
	position: relative;
	z-index: 0;
	height: 17px;
	width: ${({ $w }) => $w}px;
	padding-bottom: 2px;
	line-height: 13px;
	color: ${({ $active }) => ($active ? "#fff" : "#b0b0b0")};
	font-weight: ${({ $active }) => ($active ? 700 : 400)};
	&::before {
		content: "";
		position: absolute;
		inset: 0 3px;
		z-index: -1;
		border-radius: 0 0 8px 8px;
		transform: perspective(30px) rotateX(-12deg);
		background: ${({ $active }) =>
			$active ? "linear-gradient(#5a5a5a, #8d8d8d)" : "linear-gradient(#4a4a4a, #616161)"};
	}
`;

const StatusBar = styled.div`
	display: flex;
	height: 27px;
	gap: 1px;
`;

const StatusGroup = styled.div`
	display: flex;
	align-items: center;
	justify-content: space-around;
	width: ${({ $w }) => $w}px;
	border: 1px solid #7a7a7a;
	background: #4c4c4c;
	white-space: nowrap;
	font-size: 12px;
	button {
		display: flex;
		align-items: center;
	}
`;

/* ---------- data ---------- */

const tabs = ["홈", "삽입", "주석", "파라메트릭", "뷰", "관리", "출력", "애드인", "A360", "Express Tools", "주요 응용프로그램"];

const statusGroups = [
	{ w: 29, items: ["모형"] },
	{ w: 65, items: ["gridOn", "snapDots", "arrow"] },
	{ w: 103, items: ["ortho", "polar", "arrow", "iso", "arrow"] },
	{ w: 64, items: ["otrack", "osnap", "arrow"] },
	{ w: 107, items: ["annoVisible", "annoAuto", "annoScale", "1:1", "arrow"] },
	{ w: 40, items: ["cog", "arrow"] },
	{ w: 25, items: ["plus"] },
	{ w: 26, items: ["isolate"] },
	{ w: 26, items: ["hardware"] },
	{ w: 51, items: ["fullscreen", "menu"] },
];

const ORIGIN = { x: 430, y: 596 };
const STEP = 9.924;

const gridLines = (from, to, origin) => {
	const lines = [];
	for (let i = from; i <= to; i++) {
		lines.push({ at: Math.round(origin + i * STEP), major: i % 5 === 0 });
	}
	return lines;
};
const columns = gridLines(-43, 340, ORIGIN.x);
const rows = gridLines(-60, 140, ORIGIN.y);

const path = (lines, major, toPath) =>
	lines
		.filter((line) => line.major === major)
		.map((line) => toPath(line.at + 0.5))
		.join("");

const vertical = (x) => `M${x} 0V3000`;
const horizontal = (y) => `M0 ${y}H4000`;

const ModelSpace = () => (
	<Drawing>
		<g fill="none">
			<path d={path(columns, false, vertical) + path(rows, false, horizontal)} stroke="#262e39" />
			<path d={path(columns, true, vertical) + path(rows, true, horizontal)} stroke="#323a4b" />
			<path d="M430.500 0V546" stroke="#1f701f" />
			<path d="M481 596.500H4000" stroke="#762630" />
			<path d="M430.500 546V596.500H481M426.500 592.500h9v9h-9z" stroke="#fff" />
			<path d="M121 6.500H166M173 6.500H218M169.500 0V3M169.500 10V55M166.500 3.500h6v6h-6z" stroke="#fff" />
		</g>
		<path d="M140 9h4v10h-4z" fill="#858a91" />
		<g fill="#fff" fontFamily="Lato" fontWeight="300" fontSize="20" textAnchor="middle">
			<text x="438" y="543">Y</text>
			<text x="491" y="595">X</text>
		</g>
	</Drawing>
);

const App = () => {
	return (
		<Shell>
			<GlobalStyle />
			<TitleBar>
				<AppButton aria-label="AutoCAD">
					<svg width="25" height="27" viewBox="0 0 26 28">
						<path d="M0 27L9 1h9l8 26h-7l-2-8-9 2-2 6z" fill="#c9252c" />
						<path d="M9 1l4 9-5 11-2 6H0z" fill="#a3151c" />
						<path d="M13 6l4 10-8 2z" fill="#8d8f92" />
						<path d="M9 1h5l5 17-2 1z" fill="#e8525a" />
						<path d="M5 21l14-5 1 3-15 5z" fill="#dd3b42" />
					</svg>
					<Arrow $color="#222" />
				</AppButton>
				<QuickAccess>
					<Sprite $active aria-label="새로 만들기"><Icon name="newFile" /></Sprite>
					<Sprite aria-label="열기"><Icon name="open" /></Sprite>
					<Sprite aria-label="저장"><Icon name="save" size={14} /></Sprite>
					<Sprite aria-label="다른 이름으로 저장"><Icon name="saveAs" /></Sprite>
					<Sprite aria-label="인쇄"><Icon name="print" /></Sprite>
					<Sprite aria-label="명령 취소"><Icon name="undo" /></Sprite>
					<Sprite $w={12} aria-label="취소 목록"><Arrow $size={3} /></Sprite>
					<Sprite aria-label="명령 복구"><Icon name="redo" /></Sprite>
					<Sprite $w={12} aria-label="복구 목록"><Arrow $size={3} $color="#bbb" /></Sprite>
					<Workspace $w={180}>
						<Icon name="gear" size={14} />
						<select aria-label="작업공간">
							<option>제도 및 주석</option>
						</select>
					</Workspace>
					<CustomizeButton aria-label="사용자화"><Arrow $size={4} /></CustomizeButton>
				</QuickAccess>
				<WindowTitle>Autodesk AutoCAD 2018</WindowTitle>
				<InfoCenter>
					<CollapseArrow aria-label="접기" />
					<Search aria-label="검색" placeholder="키워드 또는 구절 입력" />
					<Sprite aria-label="찾기"><Icon name="binoculars" /></Sprite>
					<Sprite aria-label="계정"><Icon name="user" /></Sprite>
					<SignIn>
						<span>로그인</span>
						<Arrow />
					</SignIn>
					<Sprite aria-label="상점"><Icon name="cart" /></Sprite>
					<Sprite aria-label="Exchange"><Icon name="exchange" /></Sprite>
					<Arrow />
					<Divider />
					<Help aria-label="도움말">?</Help>
					<Sprite $w={18} aria-label="도움말 메뉴"><Arrow /></Sprite>
				</InfoCenter>
				<WindowControls>
					<button aria-label="최소화"><Icon name="minimize" /></button>
					<button aria-label="복원"><Icon name="restore" /></button>
					<button aria-label="닫기"><Icon name="close" /></button>
				</WindowControls>
			</TitleBar>

			<RibbonTabs>
				{tabs.map((tab, index) => (
					<RibbonTab key={tab} $active={index === 0} $latin={/^[A-Z]/.test(tab)}>
						{tab}
					</RibbonTab>
				))}
				<RibbonToggle aria-label="리본 최소화"><Arrow /></RibbonToggle>
			</RibbonTabs>

			<Ribbon>
				<RibbonPanel title="그리기" w={204} pad={0}>
					<Big icon="line" label="선" w={44} />
					<Big icon="polyline" label="폴리선" w={36} />
				</RibbonPanel>
				<RibbonPanel title="수정" w={239} pad={6}>
					<Column $w={59}>
						<SmallTool icon="move" label="이동" />
						<SmallTool icon="copy" label="복사" />
						<SmallTool icon="stretch" label="신축" />
					</Column>
					<Column $w={59}>
						<SmallTool icon="rotate" label="회전" />
						<SmallTool icon="mirror" label="대칭" />
						<SmallTool icon="scale" label="축척" />
					</Column>
					<Column $w={87}>
						<SmallTool icon="trim" label="자르기" arrow far />
						<SmallTool icon="fillet" label="모깎기" arrow far />
						<SmallTool icon="array" label="배열" arrow />
					</Column>
					<Column>
						<SmallTool icon="erase" />
						<SmallTool icon="explode" />
						<SmallTool icon="offset" />
					</Column>
				</RibbonPanel>
				<RibbonPanel title="주석" w={168} pad={3}>
					<Big letter="A" label="문자" w={42} arrow />
					<Big icon="dimension" label="치수" w={40} />
					<Column $gap={5}>
						<SmallTool icon="linear" label="선형" arrow />
						<SmallTool icon="leader" label="지시선" arrow />
						<SmallTool icon="table" label="테이블" />
					</Column>
				</RibbonPanel>
				<RibbonPanel title="도면층" w={256}>
					<Big icon="layerProps" label={"도면층\n특성"} w={40} />
					<Column $gap={2}>
						<Row>
							<LayerCombo $w={208} $pad={3}>
								<Icon name="bulb" />
								<Icon name="sun" />
								<Icon name="unlock" />
								<Swatch />
								<select aria-label="도면층">
									<option>0</option>
								</select>
							</LayerCombo>
						</Row>
						<Row $pad={4}>
							{["layerOff", "layerIso", "layerFreeze", "layerLock"].map((name) => (
								<SmallTool key={name} icon={name} />
							))}
							<SmallTool icon="layerCurrent" label="현재로 설정" />
						</Row>
						<Row $pad={4}>
							{["layerOn", "layerUniso", "layerThaw", "layerUnlock"].map((name) => (
								<SmallTool key={name} icon={name} />
							))}
							<SmallTool icon="layerMatch" label="도면층 일치" />
						</Row>
					</Column>
				</RibbonPanel>
				<RibbonPanel title="블록" w={138} pad={1}>
					<Big icon="insert" label="삽입" w={38} />
					<Column $gap={5}>
						<SmallTool icon="blockCreate" label="작성" />
						<SmallTool icon="blockEdit" label="편집" />
						<SmallTool icon="attribute" label="속성 편집" arrow />
					</Column>
				</RibbonPanel>
				<RibbonPanel title="특성" w={244} pad={1} launcher>
					<Big icon="matchProps" label={"특성\n일치"} w={38} />
					<Column $gap={3}>
						<SmallTool icon="wheel" />
						<SmallTool icon="weights" />
						<SmallTool icon="linetypes" />
					</Column>
					<PropertyCombos>
						<Combo $w={180} $pad={12} $gap={10}>
							<Swatch $w={16} $edge="#999" />
							<select aria-label="객체 색상">
								<option>도면층별</option>
							</select>
						</Combo>
						<Combo $w={180} $pad={8}>
							<Rule $w={59} />
							<select aria-label="선가중치">
								<option>도면층별</option>
							</select>
						</Combo>
						<Combo $w={180} $pad={3}>
							<Rule $w={64} />
							<select aria-label="선종류">
								<option>ByLayer</option>
							</select>
						</Combo>
					</PropertyCombos>
				</RibbonPanel>
				<RibbonPanel title="그룹" w={68}>
					<Big icon="group" label="그룹" w={37} />
					<Column $gap={1}>
						<GroupToggle aria-label="그룹 편집"><Icon name="groupEdit" /></GroupToggle>
						<GroupToggle aria-label="그룹 해제"><Icon name="ungroup" /></GroupToggle>
						<GroupToggle $active aria-label="그룹 선택"><Icon name="groupSelect" /></GroupToggle>
					</Column>
				</RibbonPanel>
				<RibbonPanel title="유틸리티" w={104} pad={7}>
					<Big icon="measure" label="길이 분할" w={62} arrow />
					<Column $gap={11}>
						<SmallTool icon="quickSelect" />
						<SmallTool icon="point" />
						<SmallTool icon="calculator" />
					</Column>
				</RibbonPanel>
				<RibbonPanel title="클립보드" w={100} pad={10} arrow={false}>
					<Big icon="paste" label="붙여넣기" w={52} arrow />
					<Column $gap={14}>
						<SmallTool icon="cut" />
						<SmallTool icon="copyClip" />
					</Column>
				</RibbonPanel>
				<RibbonPanel title="뷰" w={48} pad={3} launcher>
					<Big icon="baseView" label="기준" w={40} arrow />
				</RibbonPanel>
			</Ribbon>

			<FileTabs>
				<FileTab><span>시작</span></FileTab>
				<FileTab $active>
					<span>Drawing6*</span>
					<TabClose aria-label="탭 닫기"><Icon name="x" /></TabClose>
				</FileTab>
				<AddTab aria-label="새 탭"><Icon name="plus" size={10} /></AddTab>
			</FileTabs>

			<Canvas>
				<ModelSpace />
				<ViewLabel>[−][평면도][2D 와이어프레임]</ViewLabel>
				<ViewControls>
					<button aria-label="뷰 최소화"><Icon name="minimizeSmall" /></button>
					<button aria-label="뷰 복원"><Icon name="restoreSmall" /></button>
					<button aria-label="뷰 닫기"><Icon name="closeSmall" /></button>
				</ViewControls>
				<ViewCube>
					<span />
					<span>북</span>
					<span />
					<span>서</span>
					<CubeFace>평면도</CubeFace>
					<span>동</span>
					<span />
					<span>남</span>
					<span />
				</ViewCube>
				<Wcs>
					WCS
					<Arrow $size={4} $color="#b5b6c2" />
				</Wcs>
				<NavBar>
					<i />
					<button aria-label="휠"><Icon name="wheelNav" size={24} box={24} /></button>
					<Arrow $color="#41464e" />
					<button aria-label="초점이동"><Icon name="hand" size={24} box={24} /></button>
					<button aria-label="줌"><Icon name="zoomNav" size={24} box={24} /></button>
					<Arrow $color="#41464e" />
					<button aria-label="궤도"><Icon name="orbit" size={24} box={24} /></button>
					<Arrow $color="#41464e" />
					<button aria-label="쇼모션"><Icon name="motion" size={24} box={24} /></button>
					<i />
				</NavBar>
				<CommandLine>
					<Grip>
						<button aria-label="명령행 닫기"><Icon name="x" /></button>
						<button aria-label="명령행 설정"><Icon name="wrench" size={14} /></button>
					</Grip>
					<History>
						<Log>
							<p>명령: STARTUP</p>
							<p>STARTUP에 대한 새 값 입력 &lt;1&gt;: *취소*</p>
						</Log>
						<Prompt>
							<Icon name="prompt" size={15} />
							<Arrow $color="#555" />
							<input aria-label="명령 입력" placeholder="명령 입력" />
							<UpArrow $size={4} $color="#111" />
						</Prompt>
					</History>
				</CommandLine>
			</Canvas>

			<Footer>
				<LayoutTabs>
					<LayoutTab $active $w={48}>모형</LayoutTab>
					<LayoutTab $w={54}>배치1</LayoutTab>
					<LayoutTab $w={54}>배치2</LayoutTab>
					<AddTab $bottom aria-label="새 배치"><Icon name="plus" size={10} /></AddTab>
				</LayoutTabs>
				<StatusBar>
					{statusGroups.map(({ w, items }) => (
						<StatusGroup key={items[0]} $w={w}>
							{items.map((item, index) => (
								<button key={index} aria-label={item}>
									{item === "arrow" ? <Arrow $size={4} /> : icons[item] ? <Icon name={item} /> : item}
								</button>
							))}
						</StatusGroup>
					))}
				</StatusBar>
			</Footer>

			<Tooltip role="tooltip">
				<p>새로 만들기</p>
				<p>빈 도면 파일을 작성합니다</p>
				<hr />
				<CommandName>
					<Icon name="command" />
					QNEW
				</CommandName>
				<p>도움말을 보려면 F1을 누르십시오</p>
			</Tooltip>
		</Shell>
	);
};

export default App;
